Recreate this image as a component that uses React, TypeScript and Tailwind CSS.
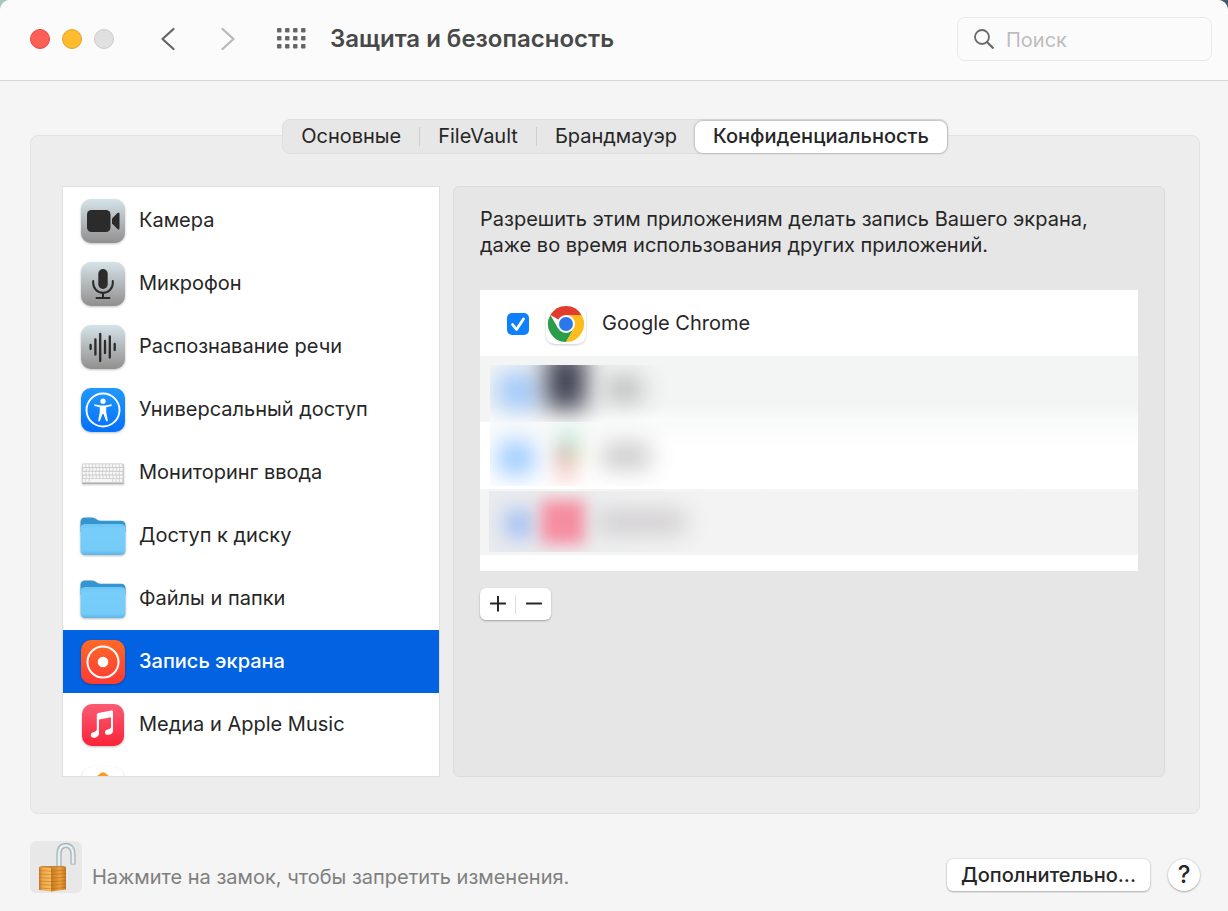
import React, { useState } from 'react';

const IconTile: React.FC<{ from: string; to: string; id: string; inset?: number; children?: React.ReactNode }> = ({
  from,
  to,
  id,
  inset = 1,
  children,
}) => (
  <svg viewBox="0 0 46 46" className="h-[46px] w-[46px] shrink-0 overflow-visible drop-shadow-[0_1px_1px_rgba(0,0,0,0.25)]">
    <defs>
      <linearGradient id={id} x1="0" y1="0" x2="0" y2="1">
        <stop offset="0" stopColor={from} />
        <stop offset="1" stopColor={to} />
      </linearGradient>
    </defs>
    <rect x={inset} y={inset} width={46 - inset * 2} height={46 - inset * 2} rx="10" fill={`url(#${id})`} />
    {children}
  </svg>
);

const CameraIcon = () => (
  <IconTile id="camera" from="#d5e3e9" to="#918f8e">
    <rect x="7" y="12" width="23.500" height="22" rx="4.500" fill="#2b2b2b" />
    <path d="M32 20.500 L37.500 15 Q39.500 13.500 39.500 16 V30 Q39.500 32.500 37.500 31 L32 25.500 Z" fill="#2b2b2b" />
  </IconTile>
);

const MicIcon = () => (
  <IconTile id="mic" from="#d5e3e9" to="#918f8e">
    <rect x="18.300" y="8" width="9.400" height="20" rx="4.700" fill="#2b2b2b" />
    <path
      d="M13.200 20 V22 A9.800 9.800 0 0 0 32.800 22 V20 M23 32 V37 M16.500 37 H29.500"
      fill="none"
      stroke="#2b2b2b"
      strokeWidth="2"
      strokeLinecap="round"
    />
  </IconTile>
);

const SpeechIcon = () => (
  <IconTile id="speech" from="#d5e3e9" to="#918f8e">
    <path
      d="M10.600 21 V25 M15.400 15.500 V30.500 M20.200 10 V37 M25 17 V29 M29.800 12.500 V33.500 M34.700 20 V26"
      stroke="#2b2b2b"
      strokeWidth="2.300"
      strokeLinecap="round"
    />
  </IconTile>
);

const AccessibilityIcon = () => (
  <IconTile id="access" from="#2199fd" to="#0470fb">
    <circle cx="23" cy="23" r="16.500" fill="none" stroke="#fff" strokeWidth="1.900" />
    <circle cx="23" cy="14.200" r="2.600" fill="#fff" />
    <path
      d="M14.500 17.300 L20.500 18.500 H25.500 L31.500 17.300 Q32.500 18.300 31.300 18.900 L26.200 20.300 V25 L27.800 33.500 Q27.300 35 26.100 34 L23.500 27 H22.500 L19.900 34 Q18.700 35 18.200 33.500 L19.800 25 V20.300 L14.700 18.900 Q13.500 18.300 14.500 17.300 Z"
      fill="#fff"
    />
  </IconTile>
);

const KeyboardIcon = () => (
  <svg viewBox="0 0 46 46" className="h-[46px] w-[46px] shrink-0 drop-shadow-[0_1px_1px_rgba(0,0,0,0.2)]">
    <rect x="2" y="13.500" width="42" height="20.500" rx="1.500" fill="#cdcdcd" />
    <rect x="2" y="33" width="42" height="1" rx="0.500" fill="#b0b0b0" />
    {[0, 1, 2, 3, 4].map((row) =>
      Array.from({ length: 12 }).map((_, i) => (
        <rect
          key={`${row}-${i}`}
          x={2.800 + i * 3.350 + (row % 2) * 0.400}
          y={14.300 + row * 3.700}
          width="2.600"
          height="2.800"
          rx="0.500"
          fill="#f7f7f7"
        />
      ))
    )}
    <rect x="12" y="29.100" width="18" height="2.800" rx="0.500" fill="#f7f7f7" />
  </svg>
);

const FolderIcon: React.FC<{ id: string }> = ({ id }) => (
  <svg viewBox="0 0 46 46" className="h-[46px] w-[46px] shrink-0 drop-shadow-[0_1px_1px_rgba(0,0,0,0.25)]">
    <defs>
      <linearGradient id={id} x1="0" y1="0" x2="0" y2="1">
        <stop offset="0" stopColor="#6bc4f3" />
        <stop offset="0.150" stopColor="#77cefb" />
        <stop offset="0.850" stopColor="#75cbf8" />
        <stop offset="1" stopColor="#5fb6e6" />
      </linearGradient>
    </defs>
    <path d="M0.500 9 Q0.500 4.500 5 4.500 H12 Q14.500 4.500 16.500 6.200 Q18.500 7.800 21 7.800 H41 Q45.500 7.800 45.500 12.500 V19 H0.500 Z" fill="#3496cf" />
    <rect x="0.500" y="11" width="45" height="31" rx="4.500" fill={`url(#${id})`} />
  </svg>
);

const RecordIcon = () => (
  <IconTile id="record" from="#fe6a26" to="#fd3a35">
    <circle cx="23" cy="23" r="15.500" fill="none" stroke="#fff" strokeWidth="2" />
    <circle cx="23" cy="23" r="5.300" fill="#fff" />
  </IconTile>
);

const MusicIcon = () => (
  <IconTile id="music" from="#fb5c74" to="#fa2339" inset={2}>
    <path
      d="M16.800 12.600 Q17 11.300 18.300 11 L31.500 8.400 Q33 8.200 33 9.700 V28.500 Q33 31.500 30 32.500 Q25 33.800 25 30.400 Q25 27.800 28.200 27.200 Q31 26.700 31 25 V15.200 L19 17.600 V31 Q19 34.500 16 35.400 Q10.800 36.500 10.800 33 Q10.800 30.500 14 29.900 Q16.800 29.400 16.800 27.500 Z"
      fill="#fff"
    />
  </IconTile>
);

const HomeIcon = () => (
  <IconTile id="home" from="#ffffff" to="#ffffff" inset={2}>
    <path d="M19.500 9 Q23 5.500 26.500 9 L38 19 V33 Q38 36 35 36 H11 Q8 36 8 33 V19 Z" fill="#fb9a1d" />
  </IconTile>
);

const ChromeIcon = () => (
  <svg viewBox="0 0 42 42" className="h-[42px] w-[42px] shrink-0 overflow-visible">
    <rect x="1" y="1" width="40" height="40" rx="9" fill="#fff" className="drop-shadow-[0_1px_1px_rgba(0,0,0,0.2)]" />
    <path d="M21 21 L5.410 12 A18 18 0 0 1 36.590 12 Z" fill="#e33b2e" />
    <path d="M13.200 25.500 L5.410 12 A18 18 0 0 0 21 39 L28.800 25.500 Z" fill="#2a9d4a" />
    <path d="M21 12 H36.590 A18 18 0 0 1 21 39 L28.800 25.500 Z" fill="#fcbd1c" />
    <circle cx="21" cy="21" r="9" fill="#fff" />
    <circle cx="21" cy="21" r="7" fill="#2a78ea" />
  </svg>
);

const PadlockIcon = () => (
  <svg viewBox="0 0 52 52" className="h-[52px] w-[52px]">
    <defs>
      <linearGradient id="brass-left" x1="0" y1="0" x2="1" y2="0">
        <stop offset="0" stopColor="#c07a2a" />
        <stop offset="0.300" stopColor="#efa848" />
        <stop offset="1" stopColor="#f8bd5c" />
      </linearGradient>
      <linearGradient id="brass-right" x1="0" y1="0" x2="1" y2="0">
        <stop offset="0" stopColor="#c57a20" />
        <stop offset="0.600" stopColor="#eda03a" />
        <stop offset="1" stopColor="#c4761f" />
      </linearGradient>
    </defs>
    <path d="M29 27 V13 Q29 4.500 36 4.500 Q43 4.500 43 14 V23.500" fill="none" stroke="#98a6ad" strokeWidth="5" />
    <path d="M29 27 V13 Q29 4.500 36 4.500 Q43 4.500 43 14 V23" fill="none" stroke="#c3d0d7" strokeWidth="3.600" />
    <path d="M29 27 V13 Q29 4.500 36 4.500 Q43 4.500 43 14 V22.500" fill="none" stroke="#eef5f8" strokeWidth="1.600" />
    <path d="M9 26 L21 26.500 V50.500 L9 49 Z" fill="url(#brass-left)" />
    <path d="M21 26.500 L36 26 V48.500 L21 50.500 Z" fill="url(#brass-right)" />
    <path d="M9 26 L12 25 H34 L36 26 L21 27 Z" fill="#c98534" />
    {[29.500, 33, 36.500, 40, 43.500, 47].map((y) => (
      <path key={y} d={`M9 ${y} L21 ${y + 0.700} L36 ${y - 0.500}`} fill="none" stroke="#a3611c" strokeWidth="0.900" opacity="0.450" />
    ))}
  </svg>
);

const categories = [
  { label: 'Камера', icon: <CameraIcon /> },
  { label: 'Микрофон', icon: <MicIcon /> },
  { label: 'Распознавание речи', icon: <SpeechIcon /> },
  { label: 'Универсальный доступ', icon: <AccessibilityIcon /> },
  { label: 'Мониторинг ввода', icon: <KeyboardIcon /> },
  { label: 'Доступ к диску', icon: <FolderIcon id="folder-disk" /> },
  { label: 'Файлы и папки', icon: <FolderIcon id="folder-files" /> },
  { label: 'Запись экрана', icon: <RecordIcon /> },
  { label: 'Медиа и Apple Music', icon: <MusicIcon /> },
];

const tabs = ['Основные', 'FileVault', 'Брандмауэр', 'Конфиденциальность'];

export default function App() {
  const [tab, setTab] = useState('Конфиденциальность');
  const [category, setCategory] = useState('Запись экрана');
  const [chromeAllowed, setChromeAllowed] = useState(true);

  return (
    <div className="h-screen bg-linear-to-r from-[#a9c6bd] to-[#3f5b73] font-['Inter','Liberation_Sans',sans-serif] text-xl text-[#262626]">
      <div className="flex h-full flex-col overflow-hidden rounded-t-[10px] bg-[#f5f5f5]">
        {/* Toolbar */}
        <header className="flex h-[81px] shrink-0 items-center border-b border-[#d8d8d8] bg-[#fbfbfb] pr-4 pb-[3px] pl-[30px]">
          <div className="flex gap-3">
            <button aria-label="Закрыть" className="h-5 w-5 rounded-full border border-[#e2463f] bg-[#fe5f57]" />
            <button aria-label="Свернуть" className="h-5 w-5 rounded-full border border-[#e1a325] bg-[#febb2e]" />
            <button aria-label="Развернуть" className="h-5 w-5 rounded-full border border-[#cbcbcb] bg-[#e0e0e0]" />
          </div>
          <button aria-label="Назад" className="ml-[46px]">
            <svg viewBox="0 0 16 24" className="h-6 w-4" fill="none" stroke="#666" strokeWidth="2.300" strokeLinecap="round" strokeLinejoin="round">
              <path d="M13.500 2 L2.500 12 L13.500 22" />
            </svg>
          </button>
          <button aria-label="Вперед" className="ml-11">
            <svg viewBox="0 0 16 24" className="h-6 w-4" fill="none" stroke="#b9b9b9" strokeWidth="2.300" strokeLinecap="round" strokeLinejoin="round">
              <path d="M2.500 2 L13.500 12 L2.500 22" />
            </svg>
          </button>
          <button aria-label="Показать все" className="ml-[41px]">
            <svg viewBox="0 0 29 21" className="h-[21px] w-[29px]" fill="#666">
              {[0, 8, 16].map((y) => [0, 8, 16, 24].map((x) => <rect key={`${x}-${y}`} x={x} y={y} width="4.500" height="4.500" rx="1" />))}
            </svg>
          </button>
          <h1 className="ml-6 text-2xl font-semibold text-[#484848]">Защита и безопасность</h1>
          <label className="ml-auto flex h-11 w-[255px] items-center gap-3 rounded-lg border border-[#e9e9e9] px-4">
            <svg viewBox="0 0 20 20" className="h-5 w-5 shrink-0" fill="none" stroke="#6a6a6a" strokeWidth="1.800" strokeLinecap="round">
              <circle cx="8" cy="8" r="7" />
              <path d="M13.200 13.200 L18.800 18.800" strokeWidth="2.300" />
            </svg>
            <input
              type="text"
              aria-label="Поиск"
              placeholder="Поиск"
              className="min-w-0 flex-1 bg-transparent pt-[2px] outline-none placeholder:text-[#bdbdbd]"
            />
          </label>
        </header>

        <main className="flex min-h-0 flex-1 flex-col pt-[38px] pr-7 pl-[30px]">
          <div role="tablist" className="z-10 mb-[-19px] flex h-[35px] items-center self-center rounded-lg border border-[#dedede] bg-[#e7e7e7]">
            {tabs.map((name, i) => (
              <React.Fragment key={name}>
                {(i === 1 || i === 2) && <span className="h-[19px] w-px bg-[#cfcfcf]" />}
                <button
                  role="tab"
                  aria-selected={tab === name}
                  onClick={() => setTab(name)}
                  className={`h-8 px-[18px] pb-[2px] leading-6 ${
                    tab === name ? 'rounded-lg bg-white font-medium shadow-[0_0_2px_1px_rgba(0,0,0,0.18)]' : ''
                  }`}
                >
                  {name}
                </button>
              </React.Fragment>
            ))}
          </div>

          <div className="flex min-h-0 flex-1 gap-[13px] rounded-lg border border-[#e2e2e2] bg-[#ededed] pt-[50px] pr-[34px] pb-9 pl-[31px]">
            {/* Categories */}
            <ul className="w-[378px] shrink-0 overflow-hidden border border-[#dfdfdf] bg-white pt-[2px]">
              {categories.map(({ label, icon }) => (
                <li key={label}>
                  <button
                    onClick={() => setCategory(label)}
                    className={`flex h-[63px] w-full items-center gap-[13px] pl-[17px] text-left ${
                      category === label ? 'bg-[#0162e2] font-medium text-white' : ''
                    }`}
                  >
                    {icon}
                    <span className="pb-[2px]">{label}</span>
                  </button>
                </li>
              ))}
              <li>
                <button aria-label="Дом" className="flex h-[63px] w-full items-center pl-[17px]">
                  <HomeIcon />
                </button>
              </li>
            </ul>

            {/* Apps allowed for the selected category */}
            <section className="flex min-w-0 flex-1 flex-col items-start rounded-md border border-[#dcdcdc] bg-[#e6e6e6] px-[26px] pt-[19px]">
              <p className="leading-[26px]">
                Разрешить этим приложениям делать запись Вашего экрана,
                <br />
                даже во время использования других приложений.
              </p>

              <div className="mt-8 w-full bg-white pb-4">
                <label className="flex h-[66px] items-center pt-[2px] pl-[27px]">
                  <span className="grid h-[22px] w-[22px] place-items-center">
                    <input
                      type="checkbox"
                      checked={chromeAllowed}
                      onChange={() => setChromeAllowed(!chromeAllowed)}
                      className="col-start-1 row-start-1 h-[22px] w-[22px] appearance-none rounded-[5px] border border-[#c4c4c4] bg-white checked:border-0 checked:bg-[#0f80fd]"
                    />
                    {chromeAllowed && (
                      <svg viewBox="0 0 22 22" className="pointer-events-none col-start-1 row-start-1 h-[22px] w-[22px]">
                        <path d="M5.500 11.500 L9.500 16.500 L16.500 6" fill="none" stroke="#fff" strokeWidth="2.800" strokeLinecap="round" strokeLinejoin="round" />
                      </svg>
                    )}
                  </span>
                  <span className="ml-4">
                    <ChromeIcon />
                  </span>
                  <span className="ml-[15px] pb-[2px]">Google Chrome</span>
                </label>

                {/* Hidden apps */}
                <div aria-hidden="true" className="h-[66px] bg-[#f3f5f4] pt-[9px] pl-[10px]">
                  <div className="flex h-[57px] items-start overflow-hidden bg-linear-to-b from-transparent from-70% to-white/70">
                    <span className="mt-2 ml-2 h-9 w-10 bg-[#9cc6fa] blur-[12px]" />
                    <span className="mt-[-12px] ml-2 h-14 w-10 bg-[#3c3e4f] blur-[12px]" />
                    <span className="mt-3 ml-5 h-6 w-9 bg-[#b4b6b5] blur-[12px]" />
                  </div>
                </div>
                <div aria-hidden="true" className="h-[67px] pl-[10px]">
                  <div className="flex h-16 items-center overflow-hidden bg-linear-to-b from-[#f9fafa] to-white to-40%">
                    <span className="mt-2 ml-2 h-8 w-9 bg-[#94c6ff] blur-[12px]" />
                    <span className="ml-5 flex flex-col blur-[9px]">
                      <span className="h-5 w-7 bg-[#d4efe5]" />
                      <span className="flex">
                        <span className="h-4 w-4 bg-[#d0bab6]" />
                        <span className="h-4 w-3 bg-[#d6ddb8]" />
                      </span>
                      <span className="h-5 w-6 bg-[#f8d6d2]" />
                    </span>
                    <span className="mt-1 ml-5 h-6 w-12 bg-[#c4c4c4] blur-[12px]" />
                  </div>
                </div>
                <div aria-hidden="true" className="h-[66px] bg-[#f3f5f4] pt-[2px] pl-[9px]">
                  <div className="flex h-[61px] items-center overflow-hidden bg-linear-to-r from-[#e9ebee] to-[#f3f3f3] to-30%">
                    <span className="mt-1 ml-4 h-7 w-7 bg-[#a3bef2] blur-[10px]" />
                    <span className="ml-2 h-11 w-11 bg-[#f58c9f] blur-[8px]" />
                    <span className="ml-3 h-5 w-[88px] bg-[#c9c6c8] blur-[12px]" />
                  </div>
                </div>
              </div>

              <div className="mt-[17px] flex h-8 items-center rounded-md bg-white shadow-[0_1px_2px_rgba(0,0,0,0.3)]">
                <button aria-label="Добавить" className="flex h-8 w-[35px] items-center justify-center">
                  <svg viewBox="0 0 16 16" className="h-4 w-4" stroke="#262626" strokeWidth="2" strokeLinecap="round">
                    <path d="M0.800 7.500 H15.200 M8 0.500 V14.700" />
                  </svg>
                </button>
                <span className="h-[19px] w-px bg-[#dcdcdc]" />
                <button aria-label="Удалить" className="flex h-8 w-[35px] items-center justify-center">
                  <svg viewBox="0 0 16 16" className="h-4 w-4" stroke="#262626" strokeWidth="2" strokeLinecap="round">
                    <path d="M0.800 7.500 H15.200" />
                  </svg>
                </button>
              </div>
            </section>
          </div>
        </main>

        <footer className="flex shrink-0 items-center pt-[27px] pr-7 pb-[18px] pl-[30px]">
          <button aria-label="Замок" className="rounded-md bg-[#e8e8e8]">
            <PadlockIcon />
          </button>
          <p className="ml-[10px] pt-5 text-[#7f7f7f]">Нажмите на замок, чтобы запретить изменения.</p>
          <div className="ml-auto flex gap-[18px] pt-4">
            <button className="h-8 rounded-md bg-white px-[14px] font-medium shadow-[0_0_2px_rgba(0,0,0,0.2),0_1px_2px_rgba(0,0,0,0.25)]">
              Дополнительно...
            </button>
            <button
              aria-label="Справка"
              className="h-8 w-8 rounded-full bg-white text-2xl leading-8 font-medium shadow-[0_0_2px_rgba(0,0,0,0.2),0_1px_2px_rgba(0,0,0,0.25)]"
            >
              ?
            </button>
          </div>
        </footer>
      </div>
    </div>
  );
}
